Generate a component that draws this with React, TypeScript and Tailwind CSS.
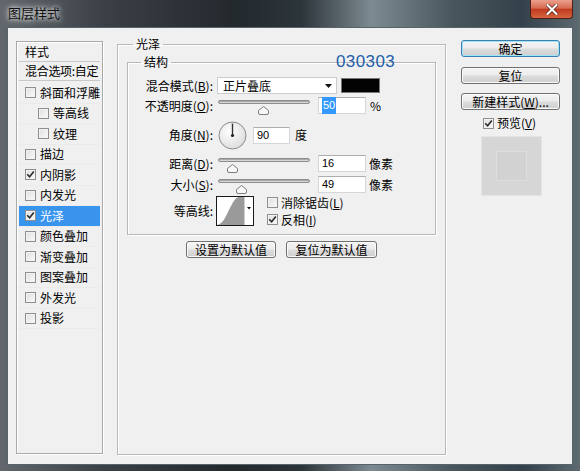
import React from 'react';

const layers = [
  { name: '斜面和浮雕', indent: false, checked: false },
  { name: '等高线', indent: true, checked: false },
  { name: '纹理', indent: true, checked: false },
  { name: '描边', indent: false, checked: false },
  { name: '内阴影', indent: false, checked: true },
  { name: '内发光', indent: false, checked: false },
  { name: '光泽', indent: false, checked: true, selected: true },
  { name: '颜色叠加', indent: false, checked: false },
  { name: '渐变叠加', indent: false, checked: false },
  { name: '图案叠加', indent: false, checked: false },
  { name: '外发光', indent: false, checked: false },
  { name: '投影', indent: false, checked: false },
];

function Checkbox({ checked }: { checked?: boolean }) {
  return (
    <span className="w-[11px] h-[11px] shrink-0 flex items-center justify-center border border-[#8f8f8f] bg-[linear-gradient(135deg,#dedede,#fbfbfb)] shadow-[inset_0_0_0_1px_#f2f2f2]">
      {checked && (
        <svg width="9" height="9" viewBox="0 0 9 9">
          <path d="M1.2 4.3 L3.6 6.8 L7.8 1.4" fill="none" stroke="#2b2b2b" strokeWidth="1.6" />
        </svg>
      )}
    </span>
  );
}

function Slider({ pos }: { pos: number }) {
  return (
    <div className="relative w-[92px] h-[17px] ml-[1px]">
      <div className="mt-[5px] h-[4px] rounded-[2px] border border-[#8d8d8d] bg-[#d6d6d6] shadow-[inset_0_1px_0_#a8a8a8]" />
      <svg className="absolute top-[6px]" style={{ left: pos }} width="11" height="9" viewBox="0 0 11 9">
        <path d="M5.5 0.5 L10.5 4.5 L10.5 7 Q10.5 8.5 9 8.5 L2 8.5 Q0.5 8.5 0.5 7 L0.5 4.5 Z" fill="#f7f7f7" stroke="#7d7d7d" />
      </svg>
    </div>
  );
}

function Field({ children, w }: { children: React.ReactNode; w: string }) {
  return (
    <div className={`${w} h-[17px] bg-white border border-[#d3d7dc] border-t-[#abadb3] flex items-center pl-[3px] text-[11px] font-['Liberation_Sans',sans-serif]`}>
      {children}
    </div>
  );
}

function Btn({ children, w, primary }: { children: React.ReactNode; w: string; primary?: boolean }) {
  return (
    <div
      className={`${w} h-[17px] flex items-center justify-center rounded-[3px] border text-[12px] leading-none bg-[linear-gradient(#f4f4f4_0%,#ececec_48%,#dcdcdc_52%,#cfcfcf_100%)] ${
        primary ? 'border-[#3c7fb1] shadow-[inset_0_0_0_1px_#9fe3f7]' : 'border-[#707070] shadow-[inset_0_0_0_1px_#fafafa]'
      }`}
    >
      {children}
    </div>
  );
}

export default function App() {
  return (
    <div className="relative w-[580px] h-[471px] overflow-hidden flex flex-col bg-[linear-gradient(90deg,#61676c_0%,#3a4045_18%,#23292d_40%,#2c353a_52%,#7d8a91_64%,#4a565d_78%,#35414a_90%,#5d6a72_100%)] font-['Noto_Sans_CJK_SC','Liberation_Sans',sans-serif] text-black">
      {/* title bar */}
      <div className="h-[27px] flex items-start justify-between pl-[8px] pr-[7px] shrink-0">
        <span className="mt-[4px] text-[13px] leading-[17px] text-[#111] [text-shadow:0_0_4px_#fff,0_0_8px_#ddd]">图层样式</span>
        <div className="w-[43px] h-[19px] rounded-b-[4px] border border-t-0 border-[#4d2118] bg-[linear-gradient(#eba08c_0%,#d86a52_45%,#c23b21_52%,#d5643f_100%)] flex items-center justify-center">
          <svg width="12" height="11" viewBox="0 0 12 11">
            <path d="M1.5 1 L10.5 10 M10.5 1 L1.5 10" stroke="#5a1f14" strokeWidth="3.6" strokeLinecap="round" />
            <path d="M1.5 1 L10.5 10 M10.5 1 L1.5 10" stroke="#ffffff" strokeWidth="2.2" strokeLinecap="round" />
          </svg>
        </div>
      </div>

      {/* dialog body */}
      <div className="mx-[7px] h-[438px] bg-[#f0f0f0] border border-[#56636b] flex items-start text-[12px]">
        {/* style list */}
        <div className="ml-[8px] mt-[13px] w-[87px] h-[413px] border border-[#a9a9a9] shadow-[inset_1px_1px_0_#fff,1px_1px_0_#fff] flex flex-col px-[2px]">
          <div className="h-[20px] flex items-center pl-[6px] border-b border-[#c8c8c8] leading-none">样式</div>
          <div className="h-[19px] flex items-center pl-[6px] border-b border-[#c8c8c8] leading-none whitespace-nowrap tracking-[-0.3px]">混合选项:自定</div>
          <div className="h-[2px]" />
          {layers.map(l => (
            <div
              key={l.name}
              className={`h-[20.5px] flex items-center gap-[4px] border-b border-[#ebebeb] leading-none ${l.indent ? 'pl-[19px]' : 'pl-[6px]'} ${
                l.selected ? 'bg-[#3894ec] text-white' : ''
              }`}
            >
              <Checkbox checked={l.checked} />
              <span>{l.name}</span>
            </div>
          ))}
        </div>

        {/* satin group */}
        <fieldset className="ml-[14px] mt-[8px] w-[329px] h-[419px] border border-[#b8b8b8] shadow-[inset_1px_1px_0_#fff,1px_1px_0_#fff] px-[9px]">
          <legend className="ml-[6px] px-[3px] text-[12px] leading-[16px]">光泽</legend>
          <fieldset className="mt-[2px] border border-[#b8b8b8] shadow-[inset_1px_1px_0_#fff,1px_1px_0_#fff] pb-[8px]">
            <legend className="ml-[13px] px-[3px] text-[12px] leading-[16px]">结构</legend>

            <div className="mt-[7px] h-[17px] flex items-center">
              <span className="w-[85px] text-right leading-none">混合模式(<u>B</u>):</span>
              <div className="ml-[4px] w-[120px] h-[17px] bg-white border border-[#c9cdd2] flex items-center justify-between pl-[5px] pr-[4px] leading-none">
                <span>正片叠底</span>
                <svg width="7" height="4" viewBox="0 0 7 4"><path d="M0 0 L7 0 L3.5 4 Z" fill="#111" /></svg>
              </div>
              <div className="ml-[4px] w-[39px] h-[15px] bg-[#030303] border border-[#777]" />
            </div>

            <div className="mt-[3px] h-[17px] flex items-center">
              <span className="w-[85px] text-right leading-none">不透明度(<u>O</u>):</span>
              <div className="ml-[4px]"><Slider pos={40} /></div>
              <div className="ml-[8px]">
                <Field w="w-[48px]"><span className="bg-[#3399ff] text-white px-[1px]">50</span></Field>
              </div>
              <span className="ml-[4px] leading-none">%</span>
            </div>

            <div className="mt-[7px] h-[28px] flex items-center">
              <span className="w-[85px] text-right leading-none">角度(<u>N</u>):</span>
              <svg className="ml-[5px]" width="29" height="29" viewBox="0 0 29 29">
                <defs>
                  <radialGradient id="dial" cx="40%" cy="35%" r="70%">
                    <stop offset="0%" stopColor="#ffffff" />
                    <stop offset="100%" stopColor="#dcdcdc" />
                  </radialGradient>
                </defs>
                <circle cx="14.5" cy="14.5" r="13.5" fill="url(#dial)" stroke="#8a8a8a" />
                <line x1="14.5" y1="14.5" x2="14.5" y2="2.5" stroke="#333" strokeWidth="1.4" />
                <circle cx="14.5" cy="14.5" r="1.6" fill="#222" />
              </svg>
              <div className="ml-[6px]"><Field w="w-[37px]">90</Field></div>
              <span className="ml-[5px] leading-none">度</span>
            </div>

            <div className="mt-[6px] h-[17px] flex items-center">
              <span className="w-[85px] text-right leading-none">距离(<u>D</u>):</span>
              <div className="ml-[4px]"><Slider pos={9} /></div>
              <div className="ml-[8px]"><Field w="w-[48px]">16</Field></div>
              <span className="ml-[3px] leading-none">像素</span>
            </div>

            <div className="mt-[4px] h-[17px] flex items-center">
              <span className="w-[85px] text-right leading-none">大小(<u>S</u>):</span>
              <div className="ml-[4px]"><Slider pos={18} /></div>
              <div className="ml-[8px]"><Field w="w-[48px]">49</Field></div>
              <span className="ml-[3px] leading-none">像素</span>
            </div>

            <div className="mt-[3px] h-[30px] flex items-center">
              <span className="w-[85px] text-right leading-none">等高线:</span>
              <svg className="ml-[3px]" width="38" height="30" viewBox="0 0 38 30">
                <rect x="0.5" y="0.5" width="37" height="29" fill="#fff" stroke="#1a1a1a" />
                <path d="M1 29 C8 28 11 17 15 10 C18 4 20 1.5 23 1 L28 1 L28 29 Z" fill="#9a9a9a" />
                <line x1="28.5" y1="1" x2="28.5" y2="29" stroke="#cfcfcf" />
                <path d="M31 11 L35 11 L33 13.5 Z" fill="#111" />
              </svg>
              <div className="ml-[13px] flex flex-col gap-[5px] leading-none">
                <div className="flex items-center gap-[3px]">
                  <Checkbox />
                  <span>消除锯齿(<u>L</u>)</span>
                </div>
                <div className="flex items-center gap-[3px]">
                  <Checkbox checked />
                  <span>反相(<u>I</u>)</span>
                </div>
              </div>
            </div>
          </fieldset>

          <div className="mt-[6px] flex justify-center gap-[10px]">
            <Btn w="w-[90px]">设置为默认值</Btn>
            <Btn w="w-[91px]">复位为默认值</Btn>
          </div>
        </fieldset>

        {/* buttons */}
        <div className="ml-[15px] mt-[12px] w-[99px] flex flex-col">
          <Btn w="w-[99px]" primary>确定</Btn>
          <div className="mt-[10px]"><Btn w="w-[99px]">复位</Btn></div>
          <div className="mt-[9px]"><Btn w="w-[99px]">新建样式(<u>W</u>)...</Btn></div>
          <div className="mt-[6px] ml-[22px] h-[14px] flex items-center gap-[3px] leading-none">
            <Checkbox checked />
            <span>预览(<u>V</u>)</span>
          </div>
          <div className="mt-[6px] ml-[20px] w-[61px] h-[60px] bg-[#d6d6d6] border border-[#e4e4e4] flex items-center justify-center">
            <div className="w-[31px] h-[30px] bg-[#d2d2d2] border border-[#dedede]" />
          </div>
        </div>
      </div>

      {/* annotation overlay */}
      <span className="absolute left-[336px] top-[52px] text-[17px] leading-[20px] tracking-[0.4px] text-[#1f5ea8] font-['Liberation_Sans',sans-serif]">030303</span>
    </div>
  );
}
